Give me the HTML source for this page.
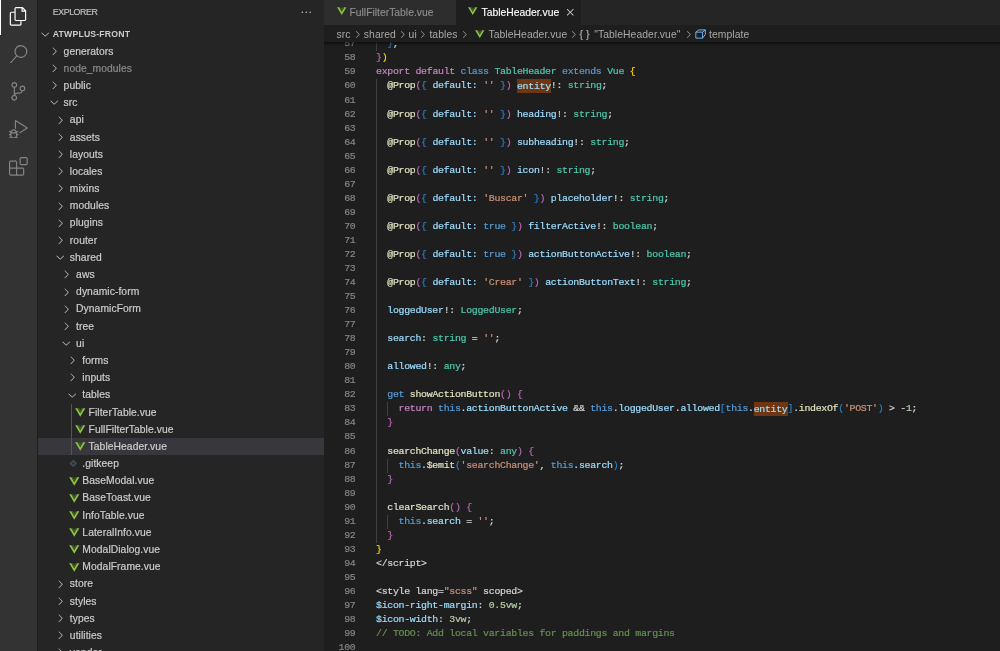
<!DOCTYPE html>
<html><head><meta charset="utf-8"><title>VS Code</title>
<style>
*{margin:0;padding:0;box-sizing:border-box}
html,body{width:1000px;height:651px;overflow:hidden;background:#1e1e1e}
body{position:relative;font-family:"Liberation Sans",sans-serif;color:#ccc;-webkit-font-smoothing:antialiased;will-change:transform}
#act{position:absolute;left:0;top:0;width:37px;height:651px;background:#333333}
#act .ind{position:absolute;left:0;top:0;width:1.3px;height:35px;background:#fff}
#act svg{position:absolute;left:9.0px;width:18.75px;height:18.75px}
#side{position:absolute;left:37.5px;top:0;width:286.5px;height:651px;background:#252526}
#tabs{position:absolute;left:324px;top:0;width:676px;height:25px;background:#252526}
.tab{position:absolute;top:0;height:25px;font-size:10.35px;line-height:25px;-webkit-text-stroke:0.12px;white-space:nowrap}
.tab svg{position:absolute;top:4.7px;width:11.5px;height:11.5px}
#bc{position:absolute;left:324px;top:25px;width:676px;height:17.2px;background:#1e1e1e;font-size:10.35px;letter-spacing:0.08px;line-height:18.4px;color:#a9a9a9;white-space:nowrap;z-index:3}
#bc span{position:absolute;top:0.7px}
.bch{position:absolute;top:3.8px;width:11px;height:11px}
.bvue{position:absolute;top:3.1px;width:11.5px;height:11.5px}
#code{position:absolute;left:324px;top:42.2px;width:676px;height:608.8px;overflow:hidden}
#code:after{content:'';position:absolute;left:0;top:0;width:676px;height:6px;box-shadow:inset 0 5px 4.5px -4.5px #000;z-index:5}
.ln{position:absolute;left:-324px;width:1000px;height:14.040px;line-height:14.040px;font-family:"Liberation Mono",monospace;font-size:9.9px;letter-spacing:-0.29px;white-space:pre;-webkit-text-stroke:0.2px;margin-top:-42.2px}
.no{position:absolute;left:324px;width:31.5px;text-align:right;color:#858585}
.cd{position:absolute;left:376.0px;color:#d4d4d4}
.gd{position:absolute;width:1px;margin-top:-42.2px;margin-left:-324px}
.kw{color:#c586c0}.blue{color:#569cd6}.type{color:#4ec9b0}.var{color:#9cdcfe}.str{color:#ce9178}.fn{color:#e0e0c0}.tx{color:#d4d4d4}.num{color:#b5cea8}.cm{color:#649150}.b1{color:#ffd700}.b2{color:#bd66bb}.b3{color:#2b7fc4}.gray{color:#808080}
.hl{background:#6e3612;padding:1.7px 0 1.5px}
.row{position:absolute;left:-37.5px;width:361.5px;height:17.188px;line-height:18.688px;font-size:10.3px;letter-spacing:0.07px;color:#cccccc;white-space:nowrap;margin-left:0;-webkit-text-stroke:0.2px}
.row.sel{background:#37373d;left:0;width:286.5px}
.row.sel .nm,.row.sel .ic,.row.sel .ic2{margin-left:-37.5px}
.row.dim .nm{color:#8b8b8b}
.row.root .nm{font-weight:bold;font-size:8.7px;letter-spacing:0.17px;color:#cccccc;-webkit-text-stroke:0;margin-top:-0.4px}
.nm{position:absolute;top:0}
.ic{position:absolute;top:2.34px;width:12.5px;height:12.5px}
.ic2{position:absolute;top:2.34px;width:12.5px;height:12.5px}
.ic svg,.ic2 svg{display:block;width:100%;height:100%}
.tg{position:absolute;width:1px;background:#555555;margin-left:-37.5px}
#ttl{position:absolute;left:15.3px;top:0;height:24px;line-height:25px;font-size:8.8px;letter-spacing:-0.42px;color:#c0c0c0;-webkit-text-stroke:0.15px}
#dots{position:absolute;left:262.45px;top:5.75px;width:12.5px;height:12.5px}
</style></head><body>
<div id="act"><div class="ind"></div>
<svg style="top:7px" viewBox="0 0 24 24"><path fill="#ffffff" d="M17.5 0h-9L7 1.5V6H2.5L1 7.5v15.07L2.5 24h12.07L16 22.57V18h4.7l1.3-1.43V4.5L17.5 0zm0 2.12l2.38 2.38H17.5V2.12zm-3 20.38h-12v-15H7v9.07L8.5 18h6v4.5zm6-6h-12v-15H16V6h4.5v10.5z"/></svg>
<svg style="top:44.5px" viewBox="0 0 24 24"><path fill="#858585" d="M15.25 0a8.25 8.25 0 0 0-6.18 13.72L1 22.88l1.12 1 8.05-9.12A8.251 8.251 0 1 0 15.25.01V0zm0 15a6.75 6.75 0 1 1 0-13.5 6.75 6.75 0 0 1 0 13.5z"/></svg>
<svg style="top:82px" viewBox="0 0 24 24"><path fill="#858585" d="M21.007 8.222A3.738 3.738 0 0 0 15.045 5.2a3.737 3.737 0 0 0 1.156 6.583 2.988 2.988 0 0 1-2.668 1.67h-2.99a4.456 4.456 0 0 0-2.989 1.165V7.4a3.737 3.737 0 1 0-1.494 0v9.117a3.776 3.776 0 1 0 1.816.099 2.990 2.990 0 0 1 2.668-1.667h2.990a4.484 4.484 0 0 0 4.223-3.039 3.736 3.736 0 0 0 3.250-3.687zM4.565 3.738a2.242 2.242 0 1 1 4.484 0 2.242 2.242 0 0 1-4.484 0zm4.484 16.441a2.242 2.242 0 1 1-4.484 0 2.242 2.242 0 0 1 4.484 0zm8.221-9.715a2.242 2.242 0 1 1 0-4.485 2.242 2.242 0 0 1 0 4.485z"/></svg>
<svg style="top:119.5px" viewBox="0 0 24 24"><path fill="#858585" d="M10.940 13.500l-1.320 1.320a3.730 3.730 0 0 0-7.240 0L1.060 13.500 0 14.560l1.720 1.720-.220.220V18H0v1.500h1.500v.080c.077.489.214.966.410 1.420L0 22.940 1.060 24l1.650-1.650A4.308 4.308 0 0 0 6 24a4.310 4.310 0 0 0 3.290-1.650L10.940 24 12 22.940 10.090 21c.198-.464.336-.951.410-1.450v-.100H12V18h-1.500v-1.500l-.220-.220L12 14.560l-1.060-1.060zM6 13.500a2.250 2.250 0 0 1 2.250 2.250h-4.500A2.250 2.250 0 0 1 6 13.500zm3 6a3.330 3.330 0 0 1-3 3 3.330 3.330 0 0 1-3-3v-2.250h6v2.250zm14.760-9.900v1.260L13.500 17.370V15.600l8.500-5.370L9 2v9.460a5.070 5.070 0 0 0-1.500-.720V.630L8.640 0l15.120 9.600z"/></svg>
<svg style="top:157px" viewBox="0 0 24 24"><path fill="#858585" d="M13.500 1.500L15 0h7.500L24 1.500V9l-1.500 1.500H15L13.500 9V1.500zm1.500 0V9h7.500V1.500H15zM0 15V6l1.500-1.500H9L10.500 6v7.500H18l1.500 1.500v7.500L18 24H1.500L0 22.500V15zm9-1.500V6H1.500v7.500H9zM9 15H1.500v7.500H9V15zm1.500 7.500H18V15h-7.500v7.500z"/></svg>
</div>
<div id="side">
<div id="ttl">EXPLORER</div><svg id="dots" viewBox="0 0 16 16"><path fill="#c5c5c5" d="M4 8a1 1 0 1 1-2 0 1 1 0 0 1 2 0zm5 0a1 1 0 1 1-2 0 1 1 0 0 1 2 0zm5 0a1 1 0 1 1-2 0 1 1 0 0 1 2 0z"/></svg>
<div class="row root" style="top:25.41px"><span class="ic" style="left:38.60px"><svg class="chev" viewBox="0 0 16 16"><path fill="#c5c5c5" d="M7.976 10.072l4.357-4.357.62.618L8.284 11h-.618L3 6.333l.619-.618 4.357 4.357z"/></svg></span><span class="nm" style="left:52.80px">ATWPLUS-FRONT</span></div>
<div class="row " style="top:42.59px"><span class="ic" style="left:47.50px"><svg class="chev" viewBox="0 0 16 16"><path fill="#c5c5c5" d="M10.072 8.024L5.715 3.667l.618-.62L11 7.716v.618L6.333 13l-.618-.619 4.357-4.357z"/></svg></span><span class="nm" style="left:63.60px">generators</span></div>
<div class="row dim" style="top:59.78px"><span class="ic" style="left:47.50px"><svg class="chev" viewBox="0 0 16 16"><path fill="#c5c5c5" d="M10.072 8.024L5.715 3.667l.618-.62L11 7.716v.618L6.333 13l-.618-.619 4.357-4.357z"/></svg></span><span class="nm" style="left:63.60px">node_modules</span></div>
<div class="row " style="top:76.97px"><span class="ic" style="left:47.50px"><svg class="chev" viewBox="0 0 16 16"><path fill="#c5c5c5" d="M10.072 8.024L5.715 3.667l.618-.62L11 7.716v.618L6.333 13l-.618-.619 4.357-4.357z"/></svg></span><span class="nm" style="left:63.60px">public</span></div>
<div class="row " style="top:94.16px"><span class="ic" style="left:47.50px"><svg class="chev" viewBox="0 0 16 16"><path fill="#c5c5c5" d="M7.976 10.072l4.357-4.357.62.618L8.284 11h-.618L3 6.333l.619-.618 4.357 4.357z"/></svg></span><span class="nm" style="left:63.60px">src</span></div>
<div class="row " style="top:111.34px"><span class="ic" style="left:53.75px"><svg class="chev" viewBox="0 0 16 16"><path fill="#c5c5c5" d="M10.072 8.024L5.715 3.667l.618-.62L11 7.716v.618L6.333 13l-.618-.619 4.357-4.357z"/></svg></span><span class="nm" style="left:69.85px">api</span></div>
<div class="row " style="top:128.53px"><span class="ic" style="left:53.75px"><svg class="chev" viewBox="0 0 16 16"><path fill="#c5c5c5" d="M10.072 8.024L5.715 3.667l.618-.62L11 7.716v.618L6.333 13l-.618-.619 4.357-4.357z"/></svg></span><span class="nm" style="left:69.85px">assets</span></div>
<div class="row " style="top:145.72px"><span class="ic" style="left:53.75px"><svg class="chev" viewBox="0 0 16 16"><path fill="#c5c5c5" d="M10.072 8.024L5.715 3.667l.618-.62L11 7.716v.618L6.333 13l-.618-.619 4.357-4.357z"/></svg></span><span class="nm" style="left:69.85px">layouts</span></div>
<div class="row " style="top:162.91px"><span class="ic" style="left:53.75px"><svg class="chev" viewBox="0 0 16 16"><path fill="#c5c5c5" d="M10.072 8.024L5.715 3.667l.618-.62L11 7.716v.618L6.333 13l-.618-.619 4.357-4.357z"/></svg></span><span class="nm" style="left:69.85px">locales</span></div>
<div class="row " style="top:180.09px"><span class="ic" style="left:53.75px"><svg class="chev" viewBox="0 0 16 16"><path fill="#c5c5c5" d="M10.072 8.024L5.715 3.667l.618-.62L11 7.716v.618L6.333 13l-.618-.619 4.357-4.357z"/></svg></span><span class="nm" style="left:69.85px">mixins</span></div>
<div class="row " style="top:197.28px"><span class="ic" style="left:53.75px"><svg class="chev" viewBox="0 0 16 16"><path fill="#c5c5c5" d="M10.072 8.024L5.715 3.667l.618-.62L11 7.716v.618L6.333 13l-.618-.619 4.357-4.357z"/></svg></span><span class="nm" style="left:69.85px">modules</span></div>
<div class="row " style="top:214.47px"><span class="ic" style="left:53.75px"><svg class="chev" viewBox="0 0 16 16"><path fill="#c5c5c5" d="M10.072 8.024L5.715 3.667l.618-.62L11 7.716v.618L6.333 13l-.618-.619 4.357-4.357z"/></svg></span><span class="nm" style="left:69.85px">plugins</span></div>
<div class="row " style="top:231.66px"><span class="ic" style="left:53.75px"><svg class="chev" viewBox="0 0 16 16"><path fill="#c5c5c5" d="M10.072 8.024L5.715 3.667l.618-.62L11 7.716v.618L6.333 13l-.618-.619 4.357-4.357z"/></svg></span><span class="nm" style="left:69.85px">router</span></div>
<div class="row " style="top:248.84px"><span class="ic" style="left:53.75px"><svg class="chev" viewBox="0 0 16 16"><path fill="#c5c5c5" d="M7.976 10.072l4.357-4.357.62.618L8.284 11h-.618L3 6.333l.619-.618 4.357 4.357z"/></svg></span><span class="nm" style="left:69.85px">shared</span></div>
<div class="row " style="top:266.03px"><span class="ic" style="left:60.00px"><svg class="chev" viewBox="0 0 16 16"><path fill="#c5c5c5" d="M10.072 8.024L5.715 3.667l.618-.62L11 7.716v.618L6.333 13l-.618-.619 4.357-4.357z"/></svg></span><span class="nm" style="left:76.10px">aws</span></div>
<div class="row " style="top:283.22px"><span class="ic" style="left:60.00px"><svg class="chev" viewBox="0 0 16 16"><path fill="#c5c5c5" d="M10.072 8.024L5.715 3.667l.618-.62L11 7.716v.618L6.333 13l-.618-.619 4.357-4.357z"/></svg></span><span class="nm" style="left:76.10px">dynamic-form</span></div>
<div class="row " style="top:300.41px"><span class="ic" style="left:60.00px"><svg class="chev" viewBox="0 0 16 16"><path fill="#c5c5c5" d="M10.072 8.024L5.715 3.667l.618-.62L11 7.716v.618L6.333 13l-.618-.619 4.357-4.357z"/></svg></span><span class="nm" style="left:76.10px">DynamicForm</span></div>
<div class="row " style="top:317.59px"><span class="ic" style="left:60.00px"><svg class="chev" viewBox="0 0 16 16"><path fill="#c5c5c5" d="M10.072 8.024L5.715 3.667l.618-.62L11 7.716v.618L6.333 13l-.618-.619 4.357-4.357z"/></svg></span><span class="nm" style="left:76.10px">tree</span></div>
<div class="row " style="top:334.78px"><span class="ic" style="left:60.00px"><svg class="chev" viewBox="0 0 16 16"><path fill="#c5c5c5" d="M7.976 10.072l4.357-4.357.62.618L8.284 11h-.618L3 6.333l.619-.618 4.357 4.357z"/></svg></span><span class="nm" style="left:76.10px">ui</span></div>
<div class="row " style="top:351.97px"><span class="ic" style="left:66.25px"><svg class="chev" viewBox="0 0 16 16"><path fill="#c5c5c5" d="M10.072 8.024L5.715 3.667l.618-.62L11 7.716v.618L6.333 13l-.618-.619 4.357-4.357z"/></svg></span><span class="nm" style="left:82.35px">forms</span></div>
<div class="row " style="top:369.16px"><span class="ic" style="left:66.25px"><svg class="chev" viewBox="0 0 16 16"><path fill="#c5c5c5" d="M10.072 8.024L5.715 3.667l.618-.62L11 7.716v.618L6.333 13l-.618-.619 4.357-4.357z"/></svg></span><span class="nm" style="left:82.35px">inputs</span></div>
<div class="row " style="top:386.34px"><span class="ic" style="left:66.25px"><svg class="chev" viewBox="0 0 16 16"><path fill="#c5c5c5" d="M7.976 10.072l4.357-4.357.62.618L8.284 11h-.618L3 6.333l.619-.618 4.357 4.357z"/></svg></span><span class="nm" style="left:82.35px">tables</span></div>
<div class="row " style="top:403.53px"><span class="ic2" style="left:74.40px"><svg class="vue" viewBox="0 0 32 32"><path fill="#8dc149" d="M3 6h5.800L16 18.800 23.200 6H29L16 27.500z"/><path fill="#3f5f1c" d="M8.800 6h4.600L16 10.800 18.600 6h4.600L16 18.800z"/></svg></span><span class="nm" style="left:88.60px">FilterTable.vue</span></div>
<div class="row " style="top:420.72px"><span class="ic2" style="left:74.40px"><svg class="vue" viewBox="0 0 32 32"><path fill="#8dc149" d="M3 6h5.800L16 18.800 23.200 6H29L16 27.500z"/><path fill="#3f5f1c" d="M8.800 6h4.600L16 10.800 18.600 6h4.600L16 18.800z"/></svg></span><span class="nm" style="left:88.60px">FullFilterTable.vue</span></div>
<div class="row sel" style="top:437.91px"><span class="ic2" style="left:74.40px"><svg class="vue" viewBox="0 0 32 32"><path fill="#8dc149" d="M3 6h5.800L16 18.800 23.200 6H29L16 27.500z"/><path fill="#3f5f1c" d="M8.800 6h4.600L16 10.800 18.600 6h4.600L16 18.800z"/></svg></span><span class="nm" style="left:88.60px">TableHeader.vue</span></div>
<div class="row " style="top:455.09px"><span class="ic2" style="left:68.15px"><svg class="vue" viewBox="0 0 32 32"><path fill="#3d4c55" d="M13.500 6.500l10 10-10 10-10-10z"/><circle cx="13.500" cy="16.500" r="2.600" fill="#252526"/></svg></span><span class="nm" style="left:82.35px">.gitkeep</span></div>
<div class="row " style="top:472.28px"><span class="ic2" style="left:68.15px"><svg class="vue" viewBox="0 0 32 32"><path fill="#8dc149" d="M3 6h5.800L16 18.800 23.200 6H29L16 27.500z"/><path fill="#3f5f1c" d="M8.800 6h4.600L16 10.800 18.600 6h4.600L16 18.800z"/></svg></span><span class="nm" style="left:82.35px">BaseModal.vue</span></div>
<div class="row " style="top:489.47px"><span class="ic2" style="left:68.15px"><svg class="vue" viewBox="0 0 32 32"><path fill="#8dc149" d="M3 6h5.800L16 18.800 23.200 6H29L16 27.500z"/><path fill="#3f5f1c" d="M8.800 6h4.600L16 10.800 18.600 6h4.600L16 18.800z"/></svg></span><span class="nm" style="left:82.35px">BaseToast.vue</span></div>
<div class="row " style="top:506.66px"><span class="ic2" style="left:68.15px"><svg class="vue" viewBox="0 0 32 32"><path fill="#8dc149" d="M3 6h5.800L16 18.800 23.200 6H29L16 27.500z"/><path fill="#3f5f1c" d="M8.800 6h4.600L16 10.800 18.600 6h4.600L16 18.800z"/></svg></span><span class="nm" style="left:82.35px">InfoTable.vue</span></div>
<div class="row " style="top:523.84px"><span class="ic2" style="left:68.15px"><svg class="vue" viewBox="0 0 32 32"><path fill="#8dc149" d="M3 6h5.800L16 18.800 23.200 6H29L16 27.500z"/><path fill="#3f5f1c" d="M8.800 6h4.600L16 10.800 18.600 6h4.600L16 18.800z"/></svg></span><span class="nm" style="left:82.35px">LateralInfo.vue</span></div>
<div class="row " style="top:541.03px"><span class="ic2" style="left:68.15px"><svg class="vue" viewBox="0 0 32 32"><path fill="#8dc149" d="M3 6h5.800L16 18.800 23.200 6H29L16 27.500z"/><path fill="#3f5f1c" d="M8.800 6h4.600L16 10.800 18.600 6h4.600L16 18.800z"/></svg></span><span class="nm" style="left:82.35px">ModalDialog.vue</span></div>
<div class="row " style="top:558.22px"><span class="ic2" style="left:68.15px"><svg class="vue" viewBox="0 0 32 32"><path fill="#8dc149" d="M3 6h5.800L16 18.800 23.200 6H29L16 27.500z"/><path fill="#3f5f1c" d="M8.800 6h4.600L16 10.800 18.600 6h4.600L16 18.800z"/></svg></span><span class="nm" style="left:82.35px">ModalFrame.vue</span></div>
<div class="row " style="top:575.41px"><span class="ic" style="left:53.75px"><svg class="chev" viewBox="0 0 16 16"><path fill="#c5c5c5" d="M10.072 8.024L5.715 3.667l.618-.62L11 7.716v.618L6.333 13l-.618-.619 4.357-4.357z"/></svg></span><span class="nm" style="left:69.85px">store</span></div>
<div class="row " style="top:592.59px"><span class="ic" style="left:53.75px"><svg class="chev" viewBox="0 0 16 16"><path fill="#c5c5c5" d="M10.072 8.024L5.715 3.667l.618-.62L11 7.716v.618L6.333 13l-.618-.619 4.357-4.357z"/></svg></span><span class="nm" style="left:69.85px">styles</span></div>
<div class="row " style="top:609.78px"><span class="ic" style="left:53.75px"><svg class="chev" viewBox="0 0 16 16"><path fill="#c5c5c5" d="M10.072 8.024L5.715 3.667l.618-.62L11 7.716v.618L6.333 13l-.618-.619 4.357-4.357z"/></svg></span><span class="nm" style="left:69.85px">types</span></div>
<div class="row " style="top:626.97px"><span class="ic" style="left:53.75px"><svg class="chev" viewBox="0 0 16 16"><path fill="#c5c5c5" d="M10.072 8.024L5.715 3.667l.618-.62L11 7.716v.618L6.333 13l-.618-.619 4.357-4.357z"/></svg></span><span class="nm" style="left:69.85px">utilities</span></div>
<div class="row " style="top:644.16px"><span class="ic" style="left:53.75px"><svg class="chev" viewBox="0 0 16 16"><path fill="#c5c5c5" d="M10.072 8.024L5.715 3.667l.618-.62L11 7.716v.618L6.333 13l-.618-.619 4.357-4.357z"/></svg></span><span class="nm" style="left:69.85px">vendor</span></div>
<div class="tg" style="left:71.2px;top:403.53px;height:51.56px"></div>
</div>
<div id="tabs">
<div class="tab" style="left:0;width:132px;background:#2d2d2d;color:#8f8f8f"><svg style="left:12px" viewBox="0 0 32 32"><path fill="#8dc149" d="M3 6h5.800L16 18.800 23.200 6H29L16 27.500z"/><path fill="#3f5f1c" d="M8.800 6h4.600L16 10.800 18.600 6h4.600L16 18.800z"/></svg><span style="position:absolute;left:25.5px">FullFilterTable.vue</span></div>
<div class="tab" style="left:132px;width:124.5px;background:#1e1e1e;color:#ffffff"><svg style="left:10.6px" viewBox="0 0 32 32"><path fill="#8dc149" d="M3 6h5.800L16 18.800 23.200 6H29L16 27.500z"/><path fill="#3f5f1c" d="M8.800 6h4.600L16 10.800 18.600 6h4.600L16 18.800z"/></svg><span style="position:absolute;left:25.5px">TableHeader.vue</span><svg style="left:108.2px;top:6.3px;width:12.5px;height:12.5px" viewBox="0 0 16 16"><path fill="#d8d8d8" d="M8 8.707l3.646 3.647.708-.707L8.707 8l3.647-3.646-.707-.708L8 7.293 4.354 3.646l-.707.708L7.293 8l-3.646 3.646.707.708L8 8.707z"/></svg></div>
</div>
<div id="bc">
<span style="left:12.60px">src</span><svg class="bch" style="left:28.00px" viewBox="0 0 16 16"><path fill="#a0a0a0" d="M10.072 8.024L5.715 3.667l.618-.62L11 7.716v.618L6.333 13l-.618-.619 4.357-4.357z"/></svg><span style="left:39.80px">shared</span><svg class="bch" style="left:72.90px" viewBox="0 0 16 16"><path fill="#a0a0a0" d="M10.072 8.024L5.715 3.667l.618-.62L11 7.716v.618L6.333 13l-.618-.619 4.357-4.357z"/></svg><span style="left:84.60px">ui</span><svg class="bch" style="left:93.20px" viewBox="0 0 16 16"><path fill="#a0a0a0" d="M10.072 8.024L5.715 3.667l.618-.62L11 7.716v.618L6.333 13l-.618-.619 4.357-4.357z"/></svg><span style="left:105.40px">tables</span><svg class="bch" style="left:135.30px" viewBox="0 0 16 16"><path fill="#a0a0a0" d="M10.072 8.024L5.715 3.667l.618-.62L11 7.716v.618L6.333 13l-.618-.619 4.357-4.357z"/></svg>
<svg class="bvue" style="left:149.60px" viewBox="0 0 32 32"><path fill="#8dc149" d="M3 6h5.800L16 18.800 23.200 6H29L16 27.500z"/><path fill="#3f5f1c" d="M8.800 6h4.600L16 10.800 18.600 6h4.600L16 18.800z"/></svg>
<span style="left:164.40px">TableHeader.vue</span><svg class="bch" style="left:243.60px" viewBox="0 0 16 16"><path fill="#a0a0a0" d="M10.072 8.024L5.715 3.667l.618-.62L11 7.716v.618L6.333 13l-.618-.619 4.357-4.357z"/></svg><span style="left:255.40px;letter-spacing:3.2px;-webkit-text-stroke:0.2px">{}</span><span style="left:270.20px">"TableHeader.vue"</span><svg class="bch" style="left:359.30px" viewBox="0 0 16 16"><path fill="#a0a0a0" d="M10.072 8.024L5.715 3.667l.618-.62L11 7.716v.618L6.333 13l-.618-.619 4.357-4.357z"/></svg>
<svg style="position:absolute;left:370.60px;top:4.0px;width:11.2px;height:10.2px" viewBox="0 0 16 14" fill="none" stroke="#75beff" stroke-width="1.3" stroke-linejoin="round"><path d="M1.200 4.200 5.500 1h9.300v6.500l-4 5.300H1.200zM1.200 4.200h9.600v8.600M10.800 4.200 14.800 1"/></svg>
<span style="left:385.00px">template</span>
</div>
<div id="code">
<div class="gd" style="left:376.00px;top:79.47px;height:463.32px;background:#404040"></div>
<div class="gd" style="left:387.29px;top:402.39px;height:14.04px;background:#404040"></div>
<div class="gd" style="left:387.29px;top:458.55px;height:14.04px;background:#404040"></div>
<div class="gd" style="left:387.29px;top:514.71px;height:14.04px;background:#404040"></div>
<div class="gd" style="left:376.00px;top:37.35px;height:14.04px;background:#404040"></div>
<div class="ln" style="top:37.35px"><span class="no">57</span><span class="cd">  <span class="b3">}</span><span class="tx">,</span></span></div>
<div class="ln" style="top:51.39px"><span class="no">58</span><span class="cd"><span class="b2">}</span><span class="b1">)</span></span></div>
<div class="ln" style="top:65.43px"><span class="no">59</span><span class="cd"><span class="kw">export</span> <span class="kw">default</span> <span class="blue">class</span> <span class="type">TableHeader</span> <span class="blue">extends</span> <span class="type">Vue</span> <span class="b1">{</span></span></div>
<div class="ln" style="top:79.47px"><span class="no">60</span><span class="cd">  <span class="fn">@Prop</span><span class="b2">(</span><span class="b3">{</span> <span class="var">default</span><span class="var">:</span> <span class="str">''</span> <span class="b3">}</span><span class="b2">)</span> <span class="var hl">entity</span><span class="tx">!: </span><span class="type">string</span><span class="tx">;</span></span></div>
<div class="ln" style="top:93.51px"><span class="no">61</span><span class="cd"></span></div>
<div class="ln" style="top:107.55px"><span class="no">62</span><span class="cd">  <span class="fn">@Prop</span><span class="b2">(</span><span class="b3">{</span> <span class="var">default</span><span class="var">:</span> <span class="str">''</span> <span class="b3">}</span><span class="b2">)</span> <span class="var">heading</span><span class="tx">!: </span><span class="type">string</span><span class="tx">;</span></span></div>
<div class="ln" style="top:121.59px"><span class="no">63</span><span class="cd"></span></div>
<div class="ln" style="top:135.63px"><span class="no">64</span><span class="cd">  <span class="fn">@Prop</span><span class="b2">(</span><span class="b3">{</span> <span class="var">default</span><span class="var">:</span> <span class="str">''</span> <span class="b3">}</span><span class="b2">)</span> <span class="var">subheading</span><span class="tx">!: </span><span class="type">string</span><span class="tx">;</span></span></div>
<div class="ln" style="top:149.67px"><span class="no">65</span><span class="cd"></span></div>
<div class="ln" style="top:163.71px"><span class="no">66</span><span class="cd">  <span class="fn">@Prop</span><span class="b2">(</span><span class="b3">{</span> <span class="var">default</span><span class="var">:</span> <span class="str">''</span> <span class="b3">}</span><span class="b2">)</span> <span class="var">icon</span><span class="tx">!: </span><span class="type">string</span><span class="tx">;</span></span></div>
<div class="ln" style="top:177.75px"><span class="no">67</span><span class="cd"></span></div>
<div class="ln" style="top:191.79px"><span class="no">68</span><span class="cd">  <span class="fn">@Prop</span><span class="b2">(</span><span class="b3">{</span> <span class="var">default</span><span class="var">:</span> <span class="str">'Buscar'</span> <span class="b3">}</span><span class="b2">)</span> <span class="var">placeholder</span><span class="tx">!: </span><span class="type">string</span><span class="tx">;</span></span></div>
<div class="ln" style="top:205.83px"><span class="no">69</span><span class="cd"></span></div>
<div class="ln" style="top:219.87px"><span class="no">70</span><span class="cd">  <span class="fn">@Prop</span><span class="b2">(</span><span class="b3">{</span> <span class="var">default</span><span class="var">:</span> <span class="blue">true</span> <span class="b3">}</span><span class="b2">)</span> <span class="var">filterActive</span><span class="tx">!: </span><span class="type">boolean</span><span class="tx">;</span></span></div>
<div class="ln" style="top:233.91px"><span class="no">71</span><span class="cd"></span></div>
<div class="ln" style="top:247.95px"><span class="no">72</span><span class="cd">  <span class="fn">@Prop</span><span class="b2">(</span><span class="b3">{</span> <span class="var">default</span><span class="var">:</span> <span class="blue">true</span> <span class="b3">}</span><span class="b2">)</span> <span class="var">actionButtonActive</span><span class="tx">!: </span><span class="type">boolean</span><span class="tx">;</span></span></div>
<div class="ln" style="top:261.99px"><span class="no">73</span><span class="cd"></span></div>
<div class="ln" style="top:276.03px"><span class="no">74</span><span class="cd">  <span class="fn">@Prop</span><span class="b2">(</span><span class="b3">{</span> <span class="var">default</span><span class="var">:</span> <span class="str">'Crear'</span> <span class="b3">}</span><span class="b2">)</span> <span class="var">actionButtonText</span><span class="tx">!: </span><span class="type">string</span><span class="tx">;</span></span></div>
<div class="ln" style="top:290.07px"><span class="no">75</span><span class="cd"></span></div>
<div class="ln" style="top:304.11px"><span class="no">76</span><span class="cd">  <span class="var">loggedUser</span><span class="tx">!: </span><span class="type">LoggedUser</span><span class="tx">;</span></span></div>
<div class="ln" style="top:318.15px"><span class="no">77</span><span class="cd"></span></div>
<div class="ln" style="top:332.19px"><span class="no">78</span><span class="cd">  <span class="var">search</span><span class="tx">: </span><span class="type">string</span><span class="tx"> = </span><span class="str">''</span><span class="tx">;</span></span></div>
<div class="ln" style="top:346.23px"><span class="no">79</span><span class="cd"></span></div>
<div class="ln" style="top:360.27px"><span class="no">80</span><span class="cd">  <span class="var">allowed</span><span class="tx">!: </span><span class="type">any</span><span class="tx">;</span></span></div>
<div class="ln" style="top:374.31px"><span class="no">81</span><span class="cd"></span></div>
<div class="ln" style="top:388.35px"><span class="no">82</span><span class="cd">  <span class="blue">get</span> <span class="fn">showActionButton</span><span class="b2">()</span> <span class="b2">{</span></span></div>
<div class="ln" style="top:402.39px"><span class="no">83</span><span class="cd">    <span class="kw">return</span> <span class="blue">this</span><span class="tx">.</span><span class="var">actionButtonActive</span><span class="tx"> &amp;&amp; </span><span class="blue">this</span><span class="tx">.</span><span class="var">loggedUser</span><span class="tx">.</span><span class="var">allowed</span><span class="b3">[</span><span class="blue">this</span><span class="tx">.</span><span class="var hl">entity</span><span class="b3">]</span><span class="tx">.</span><span class="fn">indexOf</span><span class="b3">(</span><span class="str">'POST'</span><span class="b3">)</span><span class="tx"> &gt; -</span><span class="num">1</span><span class="tx">;</span></span></div>
<div class="ln" style="top:416.43px"><span class="no">84</span><span class="cd">  <span class="b2">}</span></span></div>
<div class="ln" style="top:430.47px"><span class="no">85</span><span class="cd"></span></div>
<div class="ln" style="top:444.51px"><span class="no">86</span><span class="cd">  <span class="fn">searchChange</span><span class="b2">(</span><span class="var">value</span><span class="tx">: </span><span class="type">any</span><span class="b2">)</span> <span class="b2">{</span></span></div>
<div class="ln" style="top:458.55px"><span class="no">87</span><span class="cd">    <span class="blue">this</span><span class="tx">.</span><span class="fn">$emit</span><span class="b3">(</span><span class="str">'searchChange'</span><span class="tx">, </span><span class="blue">this</span><span class="tx">.</span><span class="var">search</span><span class="b3">)</span><span class="tx">;</span></span></div>
<div class="ln" style="top:472.59px"><span class="no">88</span><span class="cd">  <span class="b2">}</span></span></div>
<div class="ln" style="top:486.63px"><span class="no">89</span><span class="cd"></span></div>
<div class="ln" style="top:500.67px"><span class="no">90</span><span class="cd">  <span class="fn">clearSearch</span><span class="b2">()</span> <span class="b2">{</span></span></div>
<div class="ln" style="top:514.71px"><span class="no">91</span><span class="cd">    <span class="blue">this</span><span class="tx">.</span><span class="var">search</span><span class="tx"> = </span><span class="str">''</span><span class="tx">;</span></span></div>
<div class="ln" style="top:528.75px"><span class="no">92</span><span class="cd">  <span class="b2">}</span></span></div>
<div class="ln" style="top:542.79px"><span class="no">93</span><span class="cd"><span class="b1">}</span></span></div>
<div class="ln" style="top:556.83px"><span class="no">94</span><span class="cd"><span class="tx">&lt;/script&gt;</span></span></div>
<div class="ln" style="top:570.87px"><span class="no">95</span><span class="cd"></span></div>
<div class="ln" style="top:584.91px"><span class="no">96</span><span class="cd"><span class="tx">&lt;style lang=</span><span class="str">"scss"</span><span class="tx"> scoped&gt;</span></span></div>
<div class="ln" style="top:598.95px"><span class="no">97</span><span class="cd"><span class="var">$icon-right-margin</span><span class="tx">: </span><span class="num">0.5vw</span><span class="tx">;</span></span></div>
<div class="ln" style="top:612.99px"><span class="no">98</span><span class="cd"><span class="var">$icon-width</span><span class="tx">: </span><span class="num">3vw</span><span class="tx">;</span></span></div>
<div class="ln" style="top:627.03px"><span class="no">99</span><span class="cd"><span class="cm">// TODO: Add local variables for paddings and margins</span></span></div>
<div class="ln" style="top:641.07px"><span class="no">100</span><span class="cd"></span></div>
</div>
</body></html>
